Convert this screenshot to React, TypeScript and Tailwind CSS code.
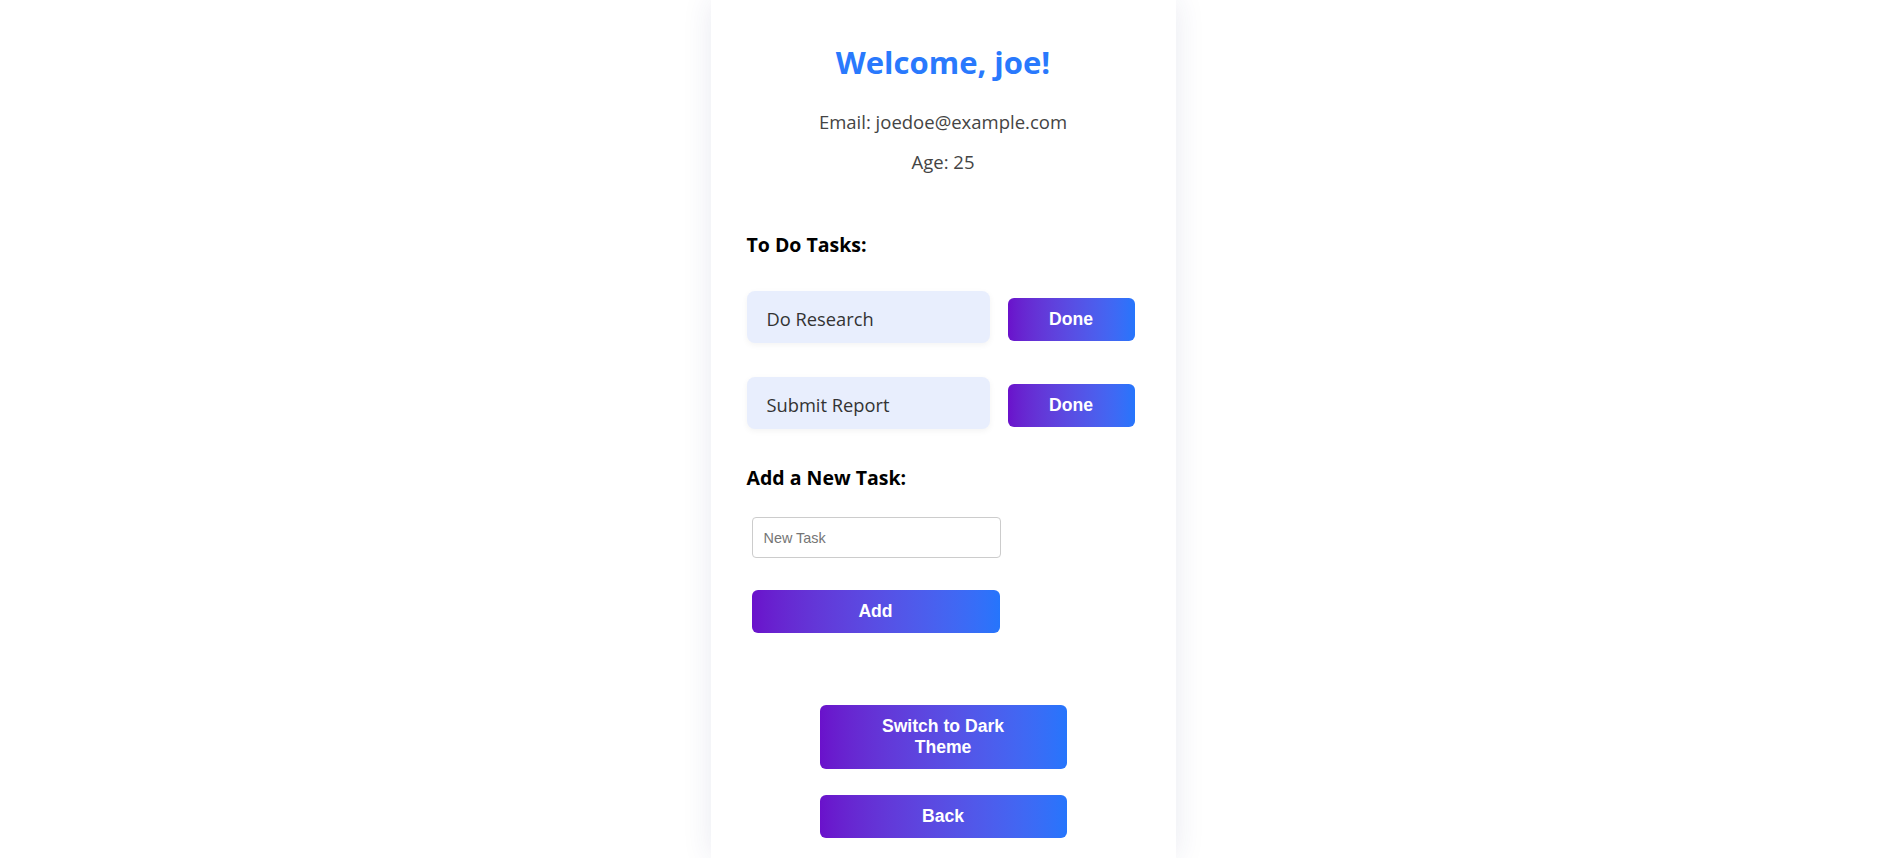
import { useState } from "react";

type Task = { id: number; title: string };

const gradientBtn =
  "bg-gradient-to-r from-[#6a11cb] to-[#2575fc] text-white font-bold text-[17.6px] leading-[21px] py-[11px] rounded-[6px] text-center font-['Liberation_Sans',sans-serif]";

const App = () => {
  const [tasks, setTasks] = useState<Task[]>([
    { id: 1, title: "Do Research" },
    { id: 2, title: "Submit Report" },
  ]);
  const [newTask, setNewTask] = useState("");

  const addTask = () => {
    if (!newTask.trim()) return;
    setTasks([...tasks, { id: Date.now(), title: newTask.trim() }]);
    setNewTask("");
  };

  return (
    <div className="min-h-screen bg-white font-['Open_Sans',sans-serif]">
      <div className="mx-auto flex w-[465px] flex-col bg-white px-[36px] pb-[20px] shadow-[0_0_28px_rgba(40,50,120,0.1)]">
        <h1 className="mt-[42px] text-center text-[31px] font-bold leading-[40px] text-[#2979fd]">
          Welcome, joe!
        </h1>
        <p className="mt-[28px] text-center text-[18.5px] leading-[24px] text-[#444]">
          Email: joedoe@example.com
        </p>
        <p className="mt-[16px] text-center text-[18.5px] leading-[24px] text-[#444]">Age: 25</p>

        <h3 className="mt-[57px] text-[19.5px] font-bold leading-[28px] text-black">To Do Tasks:</h3>

        <ul className="mt-[32px] flex flex-col gap-[34px]">
          {tasks.map(task => (
            <li key={task.id} className="flex items-start gap-[18px]">
              <div className="flex h-[52px] w-[243px] items-center rounded-[8px] bg-[#e8eefd] pl-[20px] pt-[4px] text-[18.3px] text-[#333] shadow-[0_2px_6px_rgba(0,0,0,0.05)]">
                {task.title}
              </div>
              <button
                className={`${gradientBtn} mt-[7px] w-[127px]`}
                onClick={() => setTasks(tasks.filter(t => t.id !== task.id))}
              >
                Done
              </button>
            </li>
          ))}
        </ul>

        <h3 className="mt-[35px] text-[19.5px] font-bold leading-[28px] text-black">Add a New Task:</h3>

        <input
          className="mt-[25px] ml-[5px] h-[41px] w-[249px] rounded-[4px] border border-[#cccccc] px-[11px] font-['Liberation_Sans',sans-serif] text-[14.4px] text-[#333] outline-none placeholder:text-[#757575]"
          placeholder="New Task"
          value={newTask}
          onChange={e => setNewTask(e.target.value)}
        />
        <button className={`${gradientBtn} mt-[32px] ml-[5px] w-[248px]`} onClick={addTask}>
          Add
        </button>

        <div className="mt-[72px] flex flex-col items-center gap-[26px]">
          <button className={`${gradientBtn} w-[247px] px-[50px]`}>Switch to Dark Theme</button>
          <button className={`${gradientBtn} w-[247px]`}>Back</button>
        </div>
      </div>
    </div>
  );
};

export default App;
